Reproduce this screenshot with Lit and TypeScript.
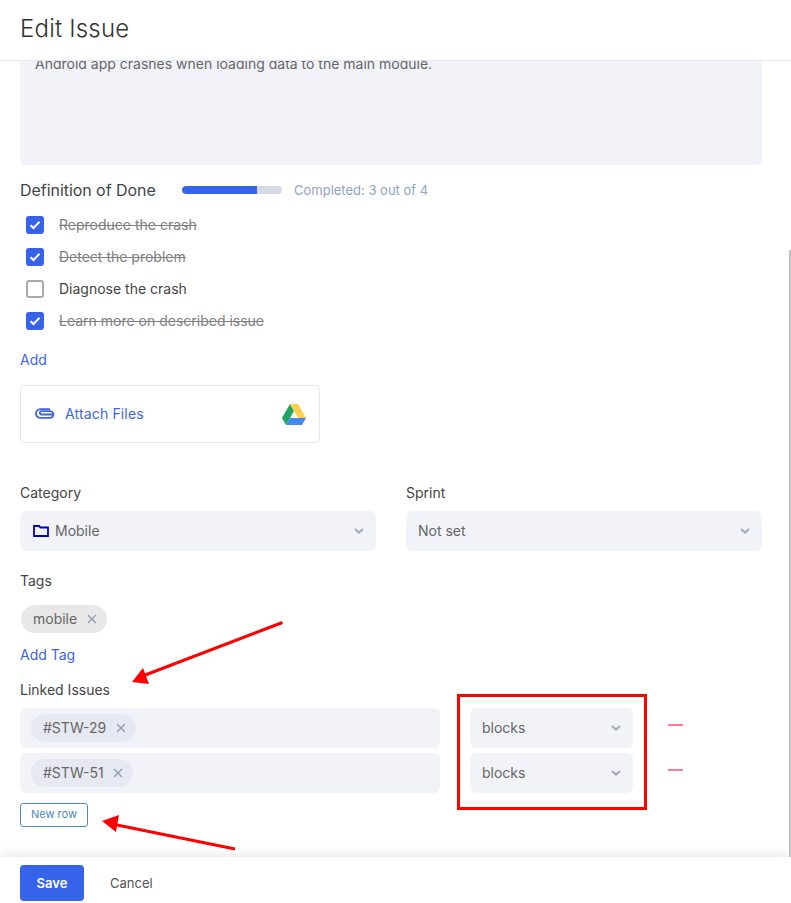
import { LitElement, html, css, svg } from "lit";
import { customElement } from "lit/decorators.js";

const chevron = html`<svg class="chev" width="10" height="6" viewBox="0 0 10 6"><path d="M1 1l4 3.600L9 1" fill="none" stroke="currentColor" stroke-width="2"/></svg>`;
const cross = html`<svg class="x" width="10" height="10" viewBox="0 0 10 10"><path d="M1 1l8 8M9 1l-8 8" fill="none" stroke="currentColor" stroke-width="1.3"/></svg>`;
const check = html`<svg width="12" height="10" viewBox="0 0 12 10"><path d="M1.500 5.200l3 2.800 6-6.200" fill="none" stroke="#fff" stroke-width="2"/></svg>`;

@customElement("app-root")
export class AppRoot extends LitElement {
  static styles = css`
    :host { display: flex; flex-direction: column; position: relative; width: 791px; height: 903px; overflow: hidden; background: #fff; font-family: Inter, "Liberation Sans", sans-serif; font-size: 14px; color: #444; }
    header { flex: none; box-sizing: content-box; border-bottom: 1px solid #e4e6f2; padding: 0 0 4px 20px; height: 56px; display: flex; align-items: center; font-size: 24px; font-weight: 300; letter-spacing: 0.2px; color: #333; }
    main { flex: 1; min-height: 0; overflow: hidden; padding: 0 29px 0 20px; }
    footer { flex: none; height: 46px; box-sizing: border-box; padding: 8px 0 0 20px; display: flex; gap: 26px; position: relative; background: #fff; box-shadow: 0 0 12px rgba(0,0,0,.13); }
    .area { height: 104px; background: #f1f3f9; border-radius: 0 0 6px 6px; overflow: hidden; padding: 0 15px; color: #666; line-height: 20px; }
    .area div { margin-top: -7px; }
    .dod { margin-top: 13px; height: 24px; display: flex; align-items: center; }
    .dod span { flex: none; width: 162px; font-size: 16px; font-weight: 400; color: #444; letter-spacing: -0.05px; }
    .bar { width: 100px; height: 8px; border-radius: 4px; background: #d5d9e8; overflow: hidden; }
    .bar i { display: block; height: 100%; background: #3563e9; border-radius: 4px 0 0 4px; }
    .done { margin-left: 12px; font-size: 13px; font-weight: 400; color: #8fa3bf; }
    .list { margin-top: 7px; }
    .item { height: 32px; display: flex; align-items: center; padding-left: 6px; gap: 15px; font-size: 14px; color: #444; }
    .item span { padding-bottom: 2px; }
    .item.on span { text-decoration: line-through; color: #808080; }
    .box { width: 18px; height: 18px; box-sizing: border-box; border-radius: 3px; border: 2px solid #a9a9a9; display: flex; align-items: center; justify-content: center; background: #fff; }
    .on .box { background: #3563e9; border: none; }
    .link { color: #3d64ea; line-height: 20px; font-weight: 400; }
    .add { margin-top: 13px; }
    .attach { margin-top: 15px; width: 300px; height: 58px; box-sizing: border-box; border: 1px solid #e4e6f2; border-radius: 4px; display: flex; align-items: center; padding: 0 13px 0 14px; color: #3d64ea; font-size: 14px; }
    .attach span { margin-left: 10px; flex: 1; letter-spacing: 0.15px; padding-bottom: 1px; }
    .cols { margin-top: 40px; display: grid; grid-template-columns: 356px 356px; gap: 30px; }
    label { display: block; line-height: 20px; color: #444; }
    .sel { margin-top: 8px; height: 40px; box-sizing: border-box; border-radius: 6px; background: #f1f3f9; display: flex; align-items: center; padding: 0 12px; color: #666; }
    .sel span { flex: 1; padding-bottom: 1px; }
    .sel svg.folder { margin: 0 6px 0 1px; }
    .chev { color: #a0a8b8; }
    .tags { margin-top: 20px; }
    .chip { display: inline-flex; align-items: center; height: 28px; border-radius: 14px; padding: 0 10px 0 12px; gap: 9.5px; box-sizing: border-box; color: #666; }
    .chip b { font-weight: 400; padding-bottom: 1px; }
    .chip .x { color: #8c9bb0; }
    .mobile { margin: 14px 0 0 1px; background: #e8e8e8; display: flex; width: 86px; gap: 10px; }
    .addtag { margin-top: 12px; }
    .linked { margin-top: 15px; }
    .rows { margin-top: 8px; display: grid; gap: 5px; }
    .row { display: grid; column-gap: 0; grid-template-columns: 420px 30px 163px 35px 15px; align-items: center; }
    .row .sel { margin: 0; grid-column: 3; }
    .issue { height: 40px; background: #f1f3f9; border-radius: 6px; padding: 6px 11px; box-sizing: border-box; }
    .issue .chip { background: #e6e9f2; }
    .minus { grid-column: 5; height: 2px; background: #ff7a90; margin-top: -7px; }
    .new { margin-top: 10px; width: 68px; height: 24px; box-sizing: border-box; border: 1px solid #4a8ac0; border-radius: 3px; padding-bottom: 2px; color: #4a8ac0; font-size: 11px; display: flex; align-items: center; justify-content: center; }
    .save { width: 64px; height: 36px; border-radius: 4px; background: #3563e9; color: #fff; font-weight: 600; font-size: 13px; display: flex; align-items: center; justify-content: center; }
    .cancel { height: 36px; display: flex; align-items: center; font-size: 13px; color: #555; }
    .scroll { position: absolute; left: 789px; top: 250px; width: 2px; height: 607px; background: #c1c1c1; }
    .overlay { position: absolute; left: 0; top: 0; pointer-events: none; }
  `;

  private item(text: string, on: boolean) {
    return html`<div class="item ${on ? "on" : ""}"><div class="box">${on ? check : ""}</div><span>${text}</span></div>`;
  }

  private row(id: string) {
    return html`<div class="row">
      <div class="issue"><div class="chip"><b>${id}</b>${cross}</div></div>
      <div class="sel"><span>blocks</span>${chevron}</div>
      <div class="minus"></div>
    </div>`;
  }

  render() {
    return html`
      <header>Edit Issue</header>
      <main>
        <div class="area"><div>Android app crashes when loading data to the main module.</div></div>
        <div class="dod"><span>Definition of Done</span><div class="bar"><i style="width:75%"></i></div><div class="done">Completed: 3 out of 4</div></div>
        <div class="list">
          ${this.item("Reproduce the crash", true)}
          ${this.item("Detect the problem", true)}
          ${this.item("Diagnose the crash", false)}
          ${this.item("Learn more on described issue", true)}
        </div>
        <div class="link add">Add</div>
        <div class="attach">
          <svg width="20" height="12" viewBox="0 0 20 12"><path d="M19 6.500H6.500a1.700 1.700 0 0 1 0-3.400H15a3.300 3.300 0 0 1 0 6.800H5.500a4.300 4.300 0 0 1-.3-8.800H15" fill="none" stroke="#3d64ea" stroke-width="1.800"/></svg>
          <span>Attach Files</span>
          <svg width="24" height="21" viewBox="0 0 24 21">
            <polygon points="8,0 0,14 4,21 12,7" fill="#1fa463"/>
            <polygon points="8,0 16,0 24,14 16,14" fill="#ffd04b"/>
            <polygon points="4,21 20,21 24,14 8,14" fill="#4687f4"/>
          </svg>
        </div>
        <div class="cols">
          <div><label>Category</label><div class="sel">
            <svg class="folder" width="16" height="12" viewBox="0 0 16 12"><path d="M1 1h5l1.500 1.500H15V11H1z" fill="none" stroke="#0000c0" stroke-width="1.800"/></svg>
            <span>Mobile</span>${chevron}</div></div>
          <div><label>Sprint</label><div class="sel"><span>Not set</span>${chevron}</div></div>
        </div>
        <label class="tags">Tags</label>
        <div class="chip mobile"><b>mobile</b>${cross}</div>
        <div class="link addtag">Add Tag</div>
        <label class="linked">Linked Issues</label>
        <div class="rows">${this.row("#STW-29")}${this.row("#STW-51")}</div>
        <div class="new">New row</div>
      </main>
      <footer><div class="save">Save</div><div class="cancel">Cancel</div></footer>
      <div class="scroll"></div>
      <svg class="overlay" width="791" height="903" viewBox="0 0 791 903">${svg`
        <rect x="458.500" y="695.500" width="187" height="113" fill="none" stroke="#f00" stroke-width="3"/>
        <path d="M282.500 622.500L140 677" stroke="#f00" stroke-width="3" fill="none"/>
        <polygon points="132,682 143,668 149,684" fill="#f00"/>
        <path d="M235 849L112 824" stroke="#f00" stroke-width="3" fill="none"/>
        <polygon points="102,821 119,815 116,832" fill="#f00"/>
      `}</svg>
    `;
  }
}
